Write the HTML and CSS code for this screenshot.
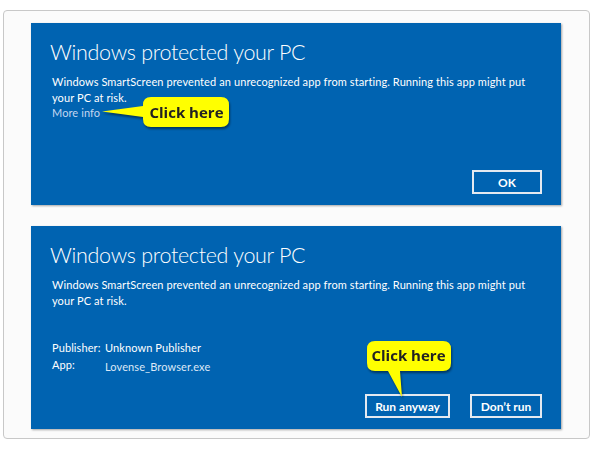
FILE: index.html
```html
<!DOCTYPE html>
<html lang="en">
<head>
<meta charset="utf-8">
<title>Windows protected your PC</title>
<link rel="stylesheet" href="styles.css">
</head>
<body>
<div class="frame">
  <section class="dialog dialog-first">
    <h1 class="title">Windows protected your PC</h1>
    <p class="body-text">Windows SmartScreen prevented an unrecognized app from starting. Running this app might put your PC at risk.</p>
    <a class="more-info">More info</a>
    <div class="actions">
      <button class="btn btn-ok">OK</button>
    </div>
    <svg class="callout callout-left" width="140" height="40" viewBox="0 0 140 40">
      <path class="callout-shape" d="M53 4 H123 Q131 4 131 12 V26 Q131 34 123 34 H53 Q45 34 45 26 V24 L4 18.5 L45 13 V12 Q45 4 53 4 Z"/>
      <text class="callout-text" x="88.5" y="24.5" text-anchor="middle">Click here</text>
    </svg>
  </section>
  <section class="dialog dialog-second">
    <h1 class="title">Windows protected your PC</h1>
    <p class="body-text">Windows SmartScreen prevented an unrecognized app from starting. Running this app might put your PC at risk.</p>
    <div class="details">
      <span class="label">Publisher:</span><span class="value">Unknown Publisher</span>
      <span class="label">App:</span><span class="value value-app">Lovense_Browser.exe</span>
    </div>
    <div class="actions">
      <button class="btn btn-run">Run anyway</button>
      <button class="btn btn-dont">Don’t run</button>
    </div>
    <svg class="callout callout-down" width="95" height="66" viewBox="0 0 95 66">
      <path class="callout-shape" d="M13 4 H81 Q89 4 89 12 V26 Q89 34 81 34 H38 L40 60 L26 34 H13 Q5 34 5 26 V12 Q5 4 13 4 Z"/>
      <text class="callout-text" x="46.5" y="24" text-anchor="middle">Click here</text>
    </svg>
  </section>
</div>
</body>
</html>
```

FILE: styles.css
```css
* { box-sizing: border-box; }
html, body { margin: 0; padding: 0; background: #ffffff; }
body { width: 593px; height: 460px; overflow: hidden; }

.frame {
  margin: 10px 0 0 3px;
  width: 587px;
  height: 429px;
  border: 1px solid #c8c8c8;
  border-radius: 4px;
  background: #fbfbfb;
  padding: 12px 0 0 27px;
  display: flex;
  flex-direction: column;
  gap: 21px;
}

.dialog {
  position: relative;
  width: 530px;
  background: #0063b1;
  box-shadow: 1px 1px 2px rgba(0, 0, 0, 0.35);
  color: #ffffff;
  font-family: "Lato", "Open Sans", sans-serif;
  padding: 14px 19px 0 19px;
  display: flex;
  flex-direction: column;
}
.dialog-first { height: 182px; }
.dialog-second { height: 203px; }

.title {
  margin: 0;
  font-weight: 300;
  font-size: 21.5px;
  line-height: 30px;
  letter-spacing: -0.3px;
}

.body-text {
  margin: 7px 0 0 2px;
  font-size: 11px;
  line-height: 15.5px;
  letter-spacing: 0.1px;
  max-width: 482px;
}

.more-info {
  margin: 0 0 0 2px;
  font-size: 11px;
  line-height: 15.5px;
  letter-spacing: 0.1px;
  color: #c3d6f0;
}

.details {
  margin: 32px 0 0 2px;
  display: grid;
  grid-template-columns: 53px auto;
  row-gap: 1px;
  font-size: 11px;
  letter-spacing: 0.1px;
  line-height: 16px;
}
.value-app { color: #dce8f7; padding-top: 2px; }

.actions {
  margin-top: auto;
  margin-bottom: 11px;
  display: flex;
  justify-content: flex-end;
  gap: 20px;
}

.btn {
  height: 24px;
  border: 2px solid #e4e9f0;
  background: transparent;
  color: #ffffff;
  font-family: "Lato", "Open Sans", sans-serif;
  font-size: 12px;
  font-weight: 700;
  padding: 0;
}
.btn-ok { width: 70px; }
.btn-run { width: 85px; }
.btn-dont { width: 72px; }

.callout {
  position: absolute;
  overflow: visible;
  filter: drop-shadow(1px 2px 1px rgba(0, 0, 0, 0.45));
}
.callout-left { left: 67px; top: 70px; }
.callout-down { left: 331px; top: 111px; }

.callout-shape { fill: #ffff00; }
.callout-text {
  font-family: "Open Sans", sans-serif;
  font-weight: 700;
  font-size: 15px;
  fill: #222222;
}
```
